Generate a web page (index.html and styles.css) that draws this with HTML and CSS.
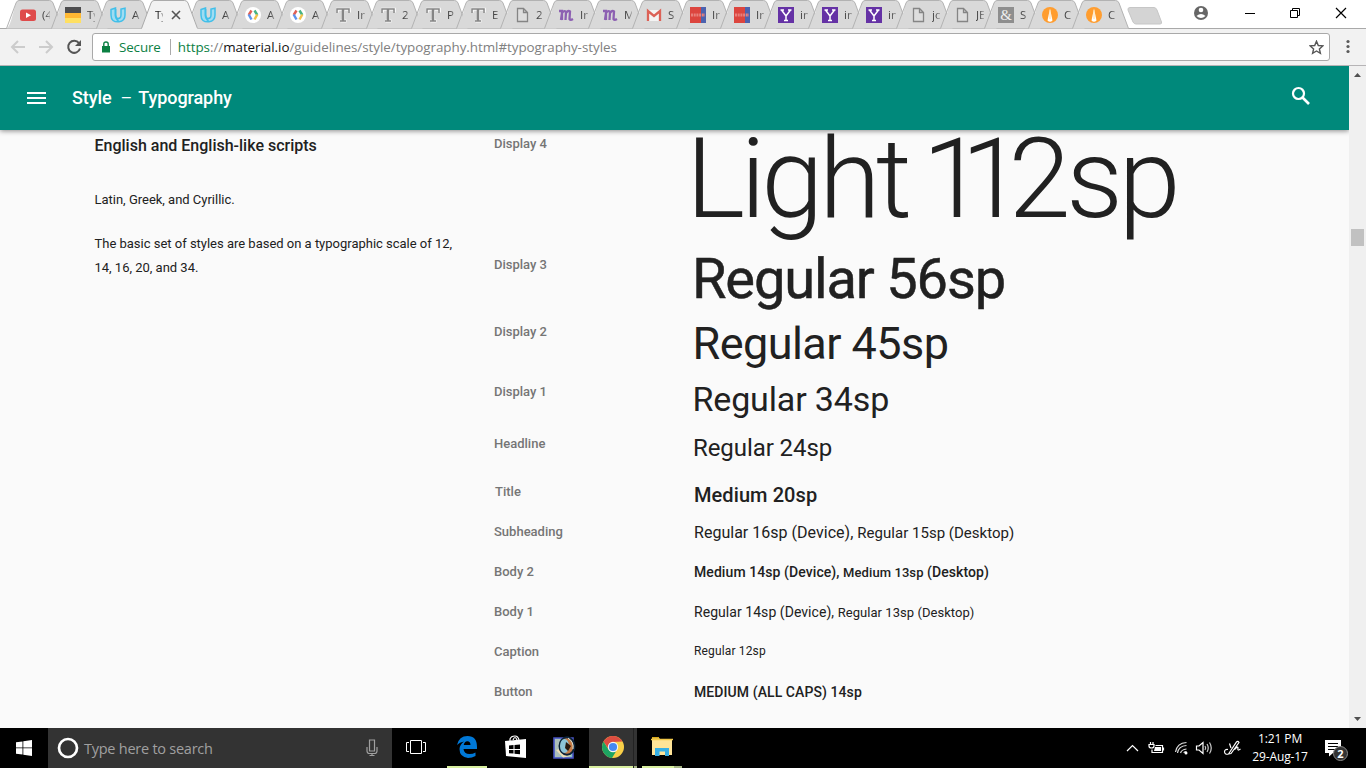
FILE: index.html
```html
<!DOCTYPE html>
<html lang="en">
<head>
<meta charset="utf-8">
<title>Style - Typography</title>
<link rel="stylesheet" href="styles.css">
</head>
<body>
<svg class="defs" width="0" height="0">
<defs>
<symbol id="tab" viewBox="0 0 60 29"><path d="M.5 28.5C4 27 6 17 10 3Q11 .5 13 .5H43.500Q46 .5 47 3L56.500 28.500Z" fill="#d9d9d9"/><path d="M.5 28.5L10 3Q11 .5 13 .5H43.500Q46 .5 47 3L56.500 28.500" fill="none" stroke="#b2b2b2"/></symbol>
<symbol id="tab-on" viewBox="0 0 60 29"><path d="M.5 29L10 3Q11 .5 13 .5H43.500Q46 .5 47 3L57 29Z" fill="#f2f2f2"/><path d="M.5 28.5L10 3Q11 .5 13 .5H43.500Q46 .5 47 3L56.500 28.500" fill="none" stroke="#aaa"/></symbol>
<symbol id="yt" viewBox="0 0 16 16"><rect y="2.500" width="16" height="11.500" rx="2.500" fill="#df4b4b"/><path d="M6 5.500V11L11 8.200Z" fill="#fff"/></symbol>
<symbol id="stripes" viewBox="0 0 16 16"><path fill="#4d4d4f" d="M0 0h16v6H0z"/><path fill="#ffb833" d="M0 6h16v5H0z"/><path fill="#ffe062" d="M0 11h16v5H0z"/></symbol>
<symbol id="uda" viewBox="0 0 16 16"><path d="M1 2.500L5.500 1V8Q5.500 11.500 8 11.500Q11 11.500 11 8V2L15 1.200V8Q15 14 9 14.800Q1 15.500 1 8Z" fill="#9fdcf2" stroke="#41bfe9" stroke-width="1.500"/><path d="M5.500 2v6q0 3.500 3 6" fill="none" stroke="#41bfe9" stroke-width="1.700"/></symbol>
<symbol id="dev" viewBox="0 0 16 16"><circle cx="8" cy="8" r="8" fill="#fff"/><g fill="none" stroke-width="2.400"><path d="M6.500 3.500L3.700 8" stroke="#e06055"/><path d="M3.700 7.500L6.500 12.500" stroke="#5c93ec"/><path d="M9.500 3.500L12.300 8" stroke="#46b483"/><path d="M12.300 7.500L9.500 12.500" stroke="#f0c24b"/></g></symbol>
<symbol id="tee" viewBox="0 0 16 16"><path d="M2.500 5.500V2.200H14.500V5.500M8.500 2.200V14M5.500 14H11.500" fill="none" stroke="#f7f7f7" stroke-width="3"/><path d="M2 6V2H14V6M5 14H11M8 2V14" fill="none" stroke="#858585" stroke-width="1.500"/><path d="M8 2V14" stroke="#858585" stroke-width="2.500"/></symbol>
<symbol id="doc" viewBox="0 0 16 16"><path d="M3.500 1.500H9.500L13.500 5.500V14.500H3.500ZM9.500 1.500V5.500H13.500" fill="#dedede" stroke="#858585" stroke-width="1.300"/></symbol>
<symbol id="em" viewBox="0 0 16 16"><path d="M1 4h3v9M3 13l1-7q2-3 4-1L7.500 13M8 6q2-3 4-1.500L11.500 12q1 1.500 3.500 0" fill="none" stroke="#8d60b2" stroke-width="2.300"/></symbol>
<symbol id="gmail" viewBox="0 0 16 16"><path fill="#f4f4f4" d="M1 3h14v11H1z"/><path d="M2 14V4L8 9L14 4V14" fill="none" stroke="#dc6257" stroke-width="2.300"/></symbol>
<symbol id="band" viewBox="0 0 16 16"><path fill="#dc453e" d="M0 0h11v16H0z"/><path fill="#4c62af" d="M11 0h5v16h-5z"/><path d="M1 8H15" stroke="#e8807b" stroke-width="3" stroke-dasharray="2 .7"/></symbol>
<symbol id="yah" viewBox="0 0 16 16"><path fill="#6532a5" d="M0 0h16v16H0z"/><path d="M3.500 3L8 9L12.500 3M8 9V14M2.500 3H6M10 3H13.500M6 13.500H10" fill="none" stroke="#fff" stroke-width="1.500"/></symbol>
<symbol id="flame" viewBox="0 0 16 16"><circle cx="8" cy="8" r="8" fill="#ff9d2f"/><path d="M8 1.500L5.500 13.500Q8 16 10.500 13.500Z" fill="#fff"/><path d="M8 3v9" stroke="#ffd9a0"/></symbol>
</defs>
</svg>
<div class="screen">
<header class="browser">
<div class="strip">
<div class="tabs">
<div class="tab w"><svg class="shape"><use href="#tab"/></svg><svg class="fav"><use href="#yt"/></svg><span>(4</span></div>
<div class="tab w"><svg class="shape"><use href="#tab"/></svg><svg class="fav"><use href="#stripes"/></svg><span>Ty</span></div>
<div class="tab w"><svg class="shape"><use href="#tab"/></svg><svg class="fav"><use href="#uda"/></svg><span>A</span></div>
<div class="tab w on"><svg class="shape"><use href="#tab-on"/></svg><span>Ty</span><svg class="close" viewBox="0 0 10 10"><path d="M1 1L9 9M9 1L1 9" stroke="#555" stroke-width="1.600"/></svg></div>
<div class="tab w"><svg class="shape"><use href="#tab"/></svg><svg class="fav"><use href="#uda"/></svg><span>A</span></div>
<div class="tab w"><svg class="shape"><use href="#tab"/></svg><svg class="fav"><use href="#dev"/></svg><span>A</span></div>
<div class="tab w"><svg class="shape"><use href="#tab"/></svg><svg class="fav"><use href="#dev"/></svg><span>A</span></div>
<div class="tab w"><svg class="shape"><use href="#tab"/></svg><svg class="fav"><use href="#tee"/></svg><span>In</span></div>
<div class="tab w"><svg class="shape"><use href="#tab"/></svg><svg class="fav"><use href="#tee"/></svg><span>2</span></div>
<div class="tab w"><svg class="shape"><use href="#tab"/></svg><svg class="fav"><use href="#tee"/></svg><span>P</span></div>
<div class="tab"><svg class="shape"><use href="#tab"/></svg><svg class="fav"><use href="#tee"/></svg><span>E</span></div>
<div class="tab"><svg class="shape"><use href="#tab"/></svg><svg class="fav"><use href="#doc"/></svg><span>2</span></div>
<div class="tab"><svg class="shape"><use href="#tab"/></svg><svg class="fav"><use href="#em"/></svg><span>In</span></div>
<div class="tab"><svg class="shape"><use href="#tab"/></svg><svg class="fav"><use href="#em"/></svg><span>M</span></div>
<div class="tab"><svg class="shape"><use href="#tab"/></svg><svg class="fav"><use href="#gmail"/></svg><span>S</span></div>
<div class="tab"><svg class="shape"><use href="#tab"/></svg><svg class="fav"><use href="#band"/></svg><span>In</span></div>
<div class="tab"><svg class="shape"><use href="#tab"/></svg><svg class="fav"><use href="#band"/></svg><span>In</span></div>
<div class="tab"><svg class="shape"><use href="#tab"/></svg><svg class="fav"><use href="#yah"/></svg><span>in</span></div>
<div class="tab"><svg class="shape"><use href="#tab"/></svg><svg class="fav"><use href="#yah"/></svg><span>in</span></div>
<div class="tab"><svg class="shape"><use href="#tab"/></svg><svg class="fav"><use href="#yah"/></svg><span>in</span></div>
<div class="tab"><svg class="shape"><use href="#tab"/></svg><svg class="fav"><use href="#doc"/></svg><span>jo</span></div>
<div class="tab"><svg class="shape"><use href="#tab"/></svg><svg class="fav"><use href="#doc"/></svg><span>JE</span></div>
<div class="tab"><svg class="shape"><use href="#tab"/></svg><b class="fav amp">&amp;</b><span>S</span></div>
<div class="tab"><svg class="shape"><use href="#tab"/></svg><svg class="fav"><use href="#flame"/></svg><span>C</span></div>
<div class="tab"><svg class="shape"><use href="#tab"/></svg><svg class="fav"><use href="#flame"/></svg><span>C</span></div>
</div>
<svg class="newtab" viewBox="0 0 36 18"><path d="M3 .5H27Q29 .5 30 3L34.500 15Q35 17 33 17H9Q7 17 6 15L1 3Q.5 .5 3 .5Z" fill="#d4d4d4" stroke="#c6c6c6"/></svg>
<svg class="winctl" width="160" height="28" viewBox="0 0 160 28"><circle cx="7" cy="13" r="7" fill="#666"/><circle cx="7" cy="10" r="2.300" fill="#fff"/><path d="M2.500 16Q7 12 11.500 16Q7 20 2.500 16" fill="#fff"/><g fill="none" stroke="#000"><path d="M51 13.500H61"/><path d="M96.500 10.500H103.500V17.500H96.500ZM98.500 10V8.500H105.500V15.500H104"/><path d="M142 8L152 18M152 8L142 18" stroke-width="1.200"/></g></svg>
</div>
<div class="toolbar">
<svg class="nav" width="84" height="20" viewBox="0 0 84 20"><g fill="none" stroke="#ccc" stroke-width="2"><path d="M25 10H12M18 4L12 10L18 16M39 10H52M46 4L52 10L46 16"/><path d="M79 6.200A6 6 0 1 0 80 11.500" stroke="#555"/></g><path d="M81 3V9H75Z" fill="#555"/></svg>
<div class="address">
<svg width="10" height="12" viewBox="0 0 10 12"><path d="M1 5h8v6.500H1z" fill="#0b8043"/><path d="M2.800 5V3Q2.800 1 5 1T7.200 3V5" fill="none" stroke="#0b8043" stroke-width="1.400"/></svg>
<span class="secure">Secure</span><span class="url"><i>https</i>://<em>material.io</em>/guidelines/style/typography.html#typography-styles</span>
<svg class="star" width="15" height="15" viewBox="0 0 15 15"><path d="M7.500 1.200L9.300 5.500L13.800 5.900L10.400 8.900L11.400 13.300L7.500 11L3.600 13.300L4.600 8.900L1.200 5.900L5.700 5.500Z" fill="none" stroke="#555" stroke-width="1.400"/></svg>
</div>
<svg width="4" height="16" viewBox="0 0 4 16"><g fill="#5a5a5a"><circle cx="2" cy="2.500" r="1.600"/><circle cx="2" cy="7.500" r="1.600"/><circle cx="2" cy="12.500" r="1.600"/></g></svg>
</div>
</header>
<div class="view">
<div class="page">
<header class="appbar">
<svg width="20" height="12" viewBox="0 0 20 12"><path d="M0 1H19M0 6H19M0 11H19" stroke="#fff" stroke-width="2"/></svg>
<h1><span>Style</span><span class="dash">–</span><span>Typography</span></h1>
<svg class="search" width="20" height="20" viewBox="0 0 20 20"><circle cx="7.500" cy="7.500" r="5.500" fill="none" stroke="#fff" stroke-width="2.200"/><path d="M11.500 11.500L18 18" stroke="#fff" stroke-width="2.700"/></svg>
</header>
<main>
<section class="intro"><h2>English and English-like scripts</h2><p>Latin, Greek, and Cyrillic.</p><p>The basic set of styles are based on a typographic scale of 12, 14, 16, 20, and 34.</p></section>
<dl class="scale">
<div class="r d4"><dt>Display 4</dt><dd>Light<span class="sp"> </span><span class="one">1</span><span class="one-b">1</span>2sp</dd></div>
<div class="r d3"><dt>Display 3</dt><dd>Regular 56sp</dd></div>
<div class="r d2"><dt>Display 2</dt><dd>Regular 45sp</dd></div>
<div class="r d1"><dt>Display 1</dt><dd>Regular 34sp</dd></div>
<div class="r hl"><dt>Headline</dt><dd>Regular 24sp</dd></div>
<div class="r ti"><dt>Title</dt><dd>Medium 20sp</dd></div>
<div class="r sh"><dt>Subheading</dt><dd>Regular 16sp (Device), <small>Regular 15sp (Desktop)</small></dd></div>
<div class="r b2"><dt>Body 2</dt><dd>Medium 14sp (Device), <small>Medium 13sp</small> <span>(Desktop)</span></dd></div>
<div class="r b1"><dt>Body 1</dt><dd>Regular 14sp (Device), <small>Regular 13sp (Desktop)</small></dd></div>
<div class="r ca"><dt>Caption</dt><dd>Regular 12sp</dd></div>
<div class="r bu"><dt>Button</dt><dd>MEDIUM (ALL CAPS) 14sp</dd></div>
</dl>
</main>
</div>
<div class="scrollbar"><svg width="7" height="4"><path d="M0 4L3.500 0L7 4Z" fill="#505050"/></svg><div class="thumb"></div><svg width="7" height="4"><path d="M0 0L3.500 4L7 0Z" fill="#505050"/></svg></div>
</div>
<footer class="taskbar">
<div class="start"><svg width="16" height="16" viewBox="0 0 16 16"><path d="M0 2.300L6.500 1.400V7.500H0ZM7.300 1.300L16 0V7.500H7.300ZM0 8.300H6.500V14.500L0 13.700ZM7.300 8.300H16V16L7.300 14.700Z" fill="#fff"/></svg></div>
<div class="cortana"><svg width="22" height="22" viewBox="0 0 22 22"><circle cx="11" cy="11" r="9" fill="none" stroke="#fff" stroke-width="2.700"/></svg><span>Type here to search</span><svg width="12" height="18" viewBox="0 0 12 18"><path d="M3.500 1H8.500V12H3.500ZM1 8V12Q1 14.500 3.500 14.500H8.500Q11 14.500 11 12V8M6 14.500V16.500M3.500 16.500H8.500" fill="none" stroke="#a0a0a0" stroke-width="1.200"/></svg></div>
<div class="apps">
<div class="app first"><svg width="20" height="15" viewBox="0 0 20 15"><path d="M4.500 .5H15.500V13.500H4.500ZM3 2.500H.5V11.500H3M17 2.500H19.500V11.500H17" fill="none" stroke="#fff"/></svg></div>
<div class="app run"><svg width="20" height="22" viewBox="0 0 20 22"><path d="M0 9Q2 0 10.500 0Q20 0 20 11V13H6.500Q7 18 12.500 18Q16 18 18.500 16.500V20Q15 22 11 22Q2.500 21 2.500 13Q3 8 7 5.500Q2.500 6 0 9ZM6.700 9H13.500Q13.500 5.500 10.300 5.200Q7.500 5.500 6.700 9Z" fill="#0078d7"/></svg></div>
<div class="app"><svg width="22" height="24" viewBox="0 0 22 24"><path d="M0 6L21 4V23L1 21Z" fill="#fff"/><path d="M5 6V4Q6 1 10 1Q13 1 14 5M8 5Q10 0 12 5" fill="none" stroke="#fff" stroke-width="1.200"/><path d="M4 10.500L8.500 10V14H4ZM9.500 10L15 9.500V14H9.500ZM4 15H8.500V18.500L4 18.200ZM9.500 15H15V19.200L9.500 18.700Z" fill="#000"/></svg></div>
<div class="app"><svg width="23" height="23" viewBox="0 0 23 23"><path d="M1 2H20V22H1Z" fill="#85bfc8" stroke="#4952c2" stroke-width="1.600"/><path d="M2 3H7V21H2Z" fill="#adbfba"/><path d="M3 14Q10 11 18 20L10 21.500Z" fill="#f0dfb5"/><ellipse cx="14" cy="10" rx="7.500" ry="8.700" fill="#c57b45" stroke="#0b2238" stroke-width="2"/><ellipse cx="11.500" cy="10" rx="4.500" ry="7" fill="#8cc4d8"/><path d="M13 6L18 10L15 15L12 12Z" fill="#28180e"/><path d="M15 2Q21 6 20 13" fill="none" stroke="#cfe4df"/></svg></div>
<div class="app run active"><svg width="22" height="22" viewBox="0 0 22 22"><circle cx="11" cy="11" r="11" fill="#f9cf48"/><path d="M1.500 5.500A11 11 0 0 1 20.500 5.500L11 6Q7 7 6.500 13Z" fill="#dd4d41"/><path d="M1.500 5.500L6.500 13.500Q9 17 14 15.500L10 22A11 11 0 0 1 1.500 5.500Z" fill="#1da462"/><circle cx="11" cy="11" r="5.200" fill="#f5f5f5"/><circle cx="11" cy="11" r="4.100" fill="#4688f1"/></svg></div>
<div class="app run stack"><svg width="22" height="20" viewBox="0 0 22 20"><path d="M1 1H8L10 3H21V18H1Z" fill="#ffe498"/><path d="M0 2.500H22" stroke="#f1c84a" stroke-width="1.500"/><path d="M1 .8H8" stroke="#d6a91c" stroke-width="1.600"/><path d="M4 19V11H18V19H14V14.500H8.500V19Z" fill="#37afe5"/></svg></div>
</div>
<div class="tray">
<svg width="118" height="20" viewBox="0 0 118 20"><g fill="none" stroke="#fff" stroke-width="1.200"><path d="M1 13L6.500 7.500L12 13"/><path d="M29.500 7.500H36.500V14.500H26V11.500M37.500 9.500V12.500"/><path d="M23 6.500H28V8Q28 10 25.500 10Q23 10 23 8ZM24.500 4V6.500M27 4V6.500"/><path d="M58 15Q58 13.500 60.500 13.500M54.500 15Q55.500 11.500 60.500 11M51.500 15Q52.500 8 60.500 7.500M49.500 14Q51 5 60.500 4.500" stroke="#ddd"/><path d="M70.500 8H73L77 4.500V15.500L73 12H70.500Z"/><path d="M79 8Q80.500 10 79 12M81 6Q83.500 10 81 14M83.500 4.500Q87 10 83.500 15.500" stroke="#ccc"/><path d="M102 11.500Q98.500 11 98.500 14Q99 17 102.500 16M102.500 16L110.500 4Q112 2.500 113 4.500L105 15.500L102.500 16M105 10L103.500 5.500M108.500 11.500Q112 7.500 112 10Q111 13.500 114.500 11"/></g><path d="M29 9H35V13H28Z" fill="#fff"/><circle cx="60" cy="15" r="1.500" fill="#fff"/></svg>
<div class="clock"><span>1:21 PM</span><span>29-Aug-17</span></div>
<div class="notify"><svg width="16" height="17" viewBox="0 0 16 17"><path d="M0 0H16V13H8L4 16.500V13H0Z" fill="#fff"/><path d="M3 3.500H13M3 6.500H13M3 9.500H10" stroke="#000"/></svg><b>2</b></div>
</div>
</footer>
</div>
</body>
</html>
```

FILE: styles.css
```css
* { box-sizing: border-box; }
body { margin: 0; font-family: "Open Sans", "Noto Sans", sans-serif; }
h1, h2, p, dl, dd { margin: 0; }
svg { flex: none; display: block; }
.defs { position: absolute; }
.screen { width: 1366px; height: 768px; overflow: hidden; display: flex; flex-direction: column; background: #fff; }
.browser { height: 66px; flex: none; background: #f2f2f2; border-bottom: 1px solid #b6b4b6; }
.strip { height: 29px; display: flex; align-items: flex-start; background: #fff; border-bottom: 1px solid #a9a9a9; }
.tabs { display: flex; padding-left: 6px; height: 29px; }
.tab { position: relative; width: 44px; height: 29px; padding: 7px 0 0 14px; display: flex; flex: none; }
.tab.w { width: 45px; }
.tab .shape { position: absolute; left: 0; top: 0; width: 60px; height: 29px; }
.tab.on { z-index: 2; }
.fav { position: relative; width: 16px; height: 16px; flex: none; }
.tab span { position: relative; margin: -1px 0 0 6px; width: 8px; flex: none; overflow: hidden; font-size: 11.5px; line-height: 17px; color: #444; white-space: nowrap; -webkit-mask-image: linear-gradient(90deg, #000 40%, rgba(0,0,0,.35)); }
.tab.on span { margin-left: 0; color: #222; }
.close { position: relative; width: 10px; height: 10px; margin: 3px 0 0 8px; }
.amp { background: #8e8e8e; color: #eee; font: 15px/16px "Liberation Serif", serif; text-align: center; }
.newtab { width: 36px; height: 18px; margin: 7px 0 0 11px; }
.winctl { margin-left: 31px; }
.toolbar { height: 36px; display: flex; align-items: center; }
.nav { margin-right: 8px; }
.address { width: 1238px; height: 28px; margin-right: 16px; padding: 0 5px 0 8px; display: flex; align-items: center; background: #fff; border: 1px solid #a9a9a9; border-radius: 3px; font-size: 13.4px; }
.secure { margin-left: 8px; padding-right: 9px; border-right: 1px solid #aaa; line-height: 16px; color: #0b8043; letter-spacing: -.12px; }
.url { margin-left: 7px; color: #808080; white-space: nowrap; letter-spacing: -.04px; }
.url i { font-style: normal; color: #0b8043; }
.url em { font-style: normal; color: #111; }
.star { margin-left: auto; }
.view { height: 662px; display: flex; flex: none; }
.page { width: 1349px; background: #fafafa; font-family: Roboto, sans-serif; color: #212121; overflow: hidden; }
.appbar { position: relative; height: 64px; padding: 0 38px 0 27px; display: flex; align-items: center; background: #00897b; color: #fff; box-shadow: 0 1px 5px rgba(0,0,0,.45); }
.appbar h1 { display: flex; margin-left: 25px; font-size: 18px; font-weight: 500; line-height: 24px; letter-spacing: -.08px; }
.appbar .dash { margin: 0 6px 0 9px; font-weight: 400; }
.search { margin: -4px 0 0 auto; }
main { display: flex; padding: 3px 0 0 94.500px; }
.intro { width: 399.500px; padding-right: 30px; }
.intro h2 { padding-top: 1px; font-size: 16px; line-height: 24px; font-weight: 500; margin-bottom: 30px; }
.intro p { font-size: 13px; line-height: 24px; margin-bottom: 20px; letter-spacing: -.01px; }
.r { display: grid; grid-template-columns: 200px 640px; align-items: start; height: 40px; white-space: nowrap; }
.r dt { font-size: 13px; font-weight: 500; line-height: 20px; color: #757575; }
.r dd { font-size: 14px; line-height: 20px; }
.d4 { height: 121px; }
.d4 dt, .d3 dt { padding-top: 1px; }
.d4 dd { margin-left: -8px; font-size: 112px; line-height: 92px; font-weight: 300; letter-spacing: -4.5px; }
.d4 .sp { margin-right: -8px; }
.d4 .one { margin-right: -19px; }
.d4 .one-b { margin-right: -10px; }
.d3 { height: 68px; }
.d3 dd { margin-left: -2px; font-size: 56px; line-height: 51px; letter-spacing: -1.15px; -webkit-text-stroke: .5px #212121; }
.d2 { height: 60px; }
.d2 dd { margin-left: -1.500px; font-size: 45px; line-height: 44px; letter-spacing: -.55px; }
.d1 { height: 52px; }
.d1 dd { margin-left: -1.500px; font-size: 34px; line-height: 35px; letter-spacing: -.15px; }
.hl { height: 48px; }
.hl dd { margin-left: -1px; font-size: 24px; line-height: 28px; letter-spacing: -.08px; }
.ti dt { padding-left: 1px; }
.ti dd { font-size: 20px; line-height: 26px; font-weight: 500; letter-spacing: .08px; }
.sh dd { font-size: 16px; line-height: 22px; letter-spacing: .02px; }
.sh small { font-size: 15px; }
.b2 dd, .bu dd { font-weight: 500; letter-spacing: .08px; }
.b2 small, .b1 small { font-size: 13px; }
.b1 dd { letter-spacing: .05px; }
.ca dd { font-size: 12px; line-height: 18px; letter-spacing: .15px; }
.bu dt, .bu dd { padding-top: 1px; }
.ca { height: 39px; }
.scrollbar { width: 17px; background: #f0f0f0; display: flex; flex-direction: column; align-items: center; justify-content: space-between; padding: 7px 0; }
.thumb { width: 13px; height: 17px; background: #c1c1c1; margin: 152px 0 auto; }
.taskbar { height: 40px; flex: none; display: flex; background: #000; color: #fff; }
.start { width: 48px; padding: 12px 16px; }
.cortana { width: 344px; display: flex; align-items: center; padding: 0 14px 0 9px; background: #333; color: #a0a0a0; font-size: 14.5px; }
.cortana span { margin: 0 auto 0 5px; letter-spacing: -.25px; }
.apps { display: flex; gap: 8.8px; margin-left: 4px; }
.app { width: 40px; padding-bottom: 2px; display: flex; align-items: center; justify-content: center; }
.first { margin-right: 2px; }
.run { background: linear-gradient(#d8ef9f, #d8ef9f) bottom / 100% 2px no-repeat; }
.active { width: 48px; margin: 0 -4px; background: linear-gradient(90deg, #d8ef9f 44px, #222 44px, #222 45px, #a6b685 45px) bottom / 100% 2px no-repeat, linear-gradient(90deg, #333 44px, #222 44px, #222 45px, #333 45px); }
.stack { background: linear-gradient(90deg, #d8ef9f 32px, #a6b685 32px) bottom / 100% 2px no-repeat; }
.tray { margin-left: auto; display: flex; align-items: center; font-size: 12px; padding-right: 16px; }
.clock { width: 66px; margin-left: 3px; display: flex; flex-direction: column; align-items: center; line-height: 18px; letter-spacing: -.1px; }
.notify { position: relative; width: 25px; height: 24px; margin-left: 12px; padding-top: 4px; }
.notify b { position: absolute; left: 8px; top: 10px; width: 15px; height: 15px; border: 1px solid #888; border-radius: 50%; background: #333; font-size: 11px; line-height: 13px; text-align: center; }
```
